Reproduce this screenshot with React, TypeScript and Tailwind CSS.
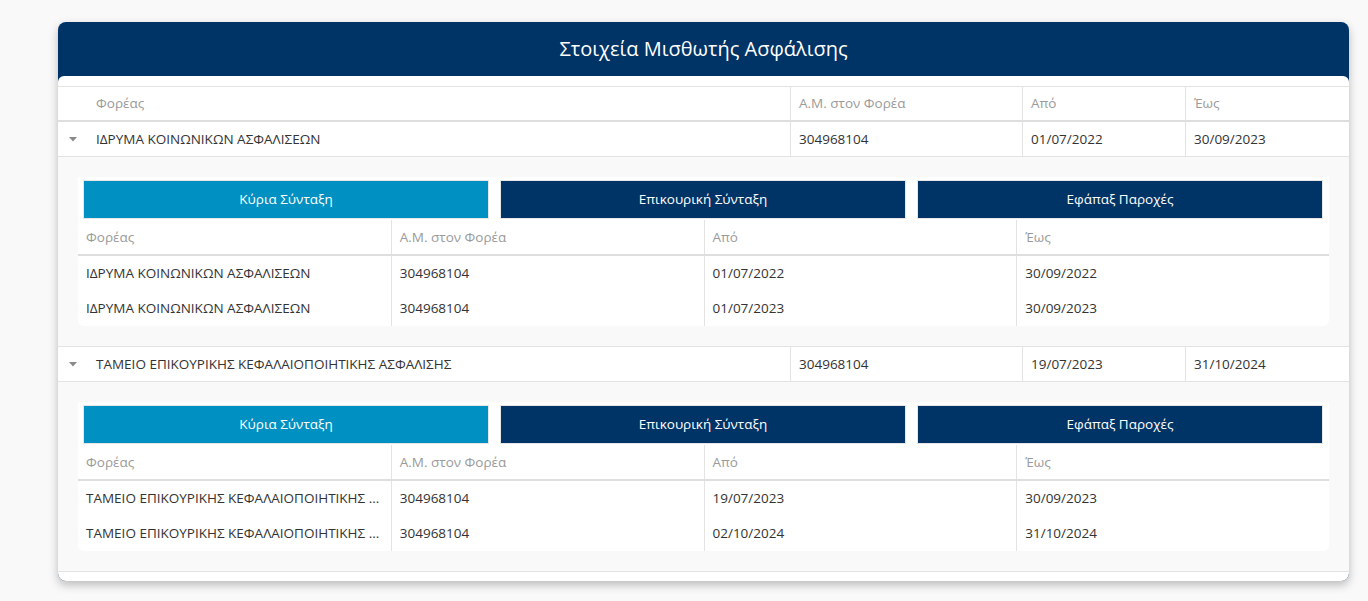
import React from "react";

type Period = { fund: string; am: string; from: string; to: string };
type Entry = Period & { details: Period[] };

const entries: Entry[] = [
  {
    fund: "ΙΔΡΥΜΑ ΚΟΙΝΩΝΙΚΩΝ ΑΣΦΑΛΙΣΕΩΝ",
    am: "304968104",
    from: "01/07/2022",
    to: "30/09/2023",
    details: [
      { fund: "ΙΔΡΥΜΑ ΚΟΙΝΩΝΙΚΩΝ ΑΣΦΑΛΙΣΕΩΝ", am: "304968104", from: "01/07/2022", to: "30/09/2022" },
      { fund: "ΙΔΡΥΜΑ ΚΟΙΝΩΝΙΚΩΝ ΑΣΦΑΛΙΣΕΩΝ", am: "304968104", from: "01/07/2023", to: "30/09/2023" },
    ],
  },
  {
    fund: "ΤΑΜΕΙΟ ΕΠΙΚΟΥΡΙΚΗΣ ΚΕΦΑΛΑΙΟΠΟΙΗΤΙΚΗΣ ΑΣΦΑΛΙΣΗΣ",
    am: "304968104",
    from: "19/07/2023",
    to: "31/10/2024",
    details: [
      { fund: "ΤΑΜΕΙΟ ΕΠΙΚΟΥΡΙΚΗΣ ΚΕΦΑΛΑΙΟΠΟΙΗΤΙΚΗΣ ...", am: "304968104", from: "19/07/2023", to: "30/09/2023" },
      { fund: "ΤΑΜΕΙΟ ΕΠΙΚΟΥΡΙΚΗΣ ΚΕΦΑΛΑΙΟΠΟΙΗΤΙΚΗΣ ...", am: "304968104", from: "02/10/2024", to: "31/10/2024" },
    ],
  },
];

const mainCols = "grid grid-cols-[732px_232px_163px_1fr]";
const innerCols = "grid grid-cols-4";

const Caret = () => (
  <svg width="8" height="5" viewBox="0 0 8 5" className="shrink-0">
    <path d="M0 0 L8 0 L4 4.5 Z" fill="#8a8a8a" />
  </svg>
);

const DetailPanel = ({ rows }: { rows: Period[] }) => {
  return (
    <div className="bg-[#f9f9f9] px-5 pt-5 pb-5 border-b border-[#e3e3e3]">
      <div className="bg-white flex gap-[11px] pl-[5px] pr-[6px] pt-[3px] pb-px">
        <button className="flex-1 h-[39px] bg-[#0091c2] text-white border border-[#e6e6e6]">
          Κύρια Σύνταξη
        </button>
        <button className="flex-1 h-[39px] bg-[#003366] text-white border border-[#e6e6e6]">
          Επικουρική Σύνταξη
        </button>
        <button className="flex-1 h-[39px] bg-[#003366] text-white border border-[#e6e6e6]">
          Εφάπαξ Παροχές
        </button>
      </div>
      <div className="bg-white rounded-b-md">
        <div className={`${innerCols} h-[36px] border-b-2 border-[#dedede] text-[#9a9a9a]`}>
          <div className="px-2 flex items-center">Φορέας</div>
          <div className="px-2 flex items-center border-l border-[#e3e3e3]">Α.Μ. στον Φορέα</div>
          <div className="px-2 flex items-center border-l border-[#e3e3e3]">Από</div>
          <div className="px-2 flex items-center border-l border-[#e3e3e3]">Έως</div>
        </div>
        {rows.map((r, i) => (
          <div key={i} className={`${innerCols} h-[35px] text-[#333]`}>
            <div className="px-2 flex items-center min-w-0 whitespace-nowrap">{r.fund}</div>
            <div className="px-2 flex items-center border-l border-[#e3e3e3]">{r.am}</div>
            <div className="px-2 flex items-center border-l border-[#e3e3e3]">{r.from}</div>
            <div className="px-2 flex items-center border-l border-[#e3e3e3]">{r.to}</div>
          </div>
        ))}
      </div>
    </div>
  );
};

export default function App() {
  return (
    <div
      className="min-h-screen bg-[#f9f9f9] pt-[22px] pl-[58px] pr-[19px] pb-5 text-[13.5px]"
      style={{ fontFamily: '"Open Sans", "Noto Sans", sans-serif' }}
    >
      <div className="bg-[#003366] rounded-lg shadow-[0_4px_10px_rgba(0,0,0,0.25)]">
        <div className="h-[54px] flex items-center justify-center text-white text-[20px]">
          Στοιχεία Μισθωτής Ασφάλισης
        </div>
        <div className="bg-white rounded-t-md rounded-b-lg pt-[10px] pb-[9px]">
          <div className="border-t border-[#e3e3e3]">
            <div className={`${mainCols} h-[35px] border-b-2 border-[#dedede] text-[#9a9a9a]`}>
              <div className="pl-[38px] flex items-center">Φορέας</div>
              <div className="px-2 flex items-center border-l border-[#e3e3e3]">Α.Μ. στον Φορέα</div>
              <div className="px-2 flex items-center border-l border-[#e3e3e3]">Από</div>
              <div className="px-2 flex items-center border-l border-[#e3e3e3]">Έως</div>
            </div>
            {entries.map((e, i) => (
              <div key={i}>
                <div className={`${mainCols} h-[35px] border-b border-[#e3e3e3] text-[#333]`}>
                  <div className="pl-[11px] flex items-center gap-[19px]">
                    <Caret />
                    <span>{e.fund}</span>
                  </div>
                  <div className="px-2 flex items-center border-l border-[#e3e3e3]">{e.am}</div>
                  <div className="px-2 flex items-center border-l border-[#e3e3e3]">{e.from}</div>
                  <div className="px-2 flex items-center border-l border-[#e3e3e3]">{e.to}</div>
                </div>
                <DetailPanel rows={e.details} />
              </div>
            ))}
          </div>
        </div>
      </div>
    </div>
  );
}
